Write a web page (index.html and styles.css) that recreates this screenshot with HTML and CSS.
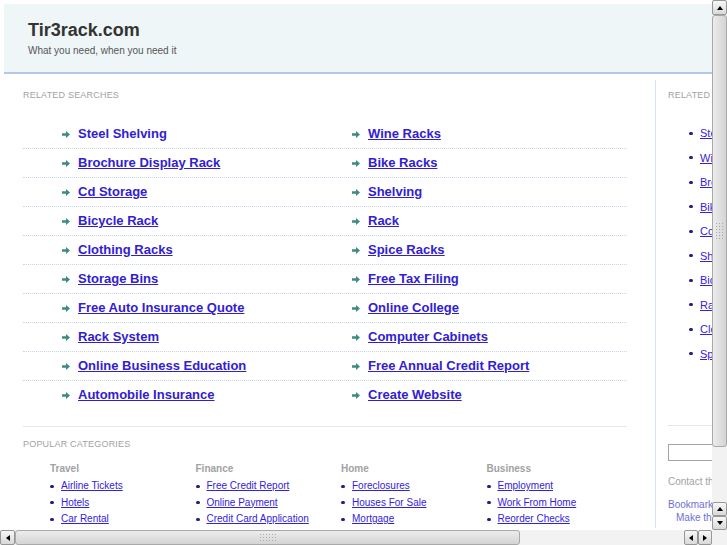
FILE: index.html
```html
<!DOCTYPE html>
<html lang="en">
<head>
    <meta charset="UTF-8">
    <meta name="viewport" content="width=device-width, initial-scale=1.0">
    <title>Tir3rack.com</title>
    <link rel="stylesheet" href="styles.css">
</head>
<body>
    <div class="page">
        <div class="header">
            <h1>Tir3rack.com</h1>
            <p>What you need, when you need it</p>
        </div>

        <div class="main">
            <div class="content">
                <h2 class="label">Related Searches</h2>
                <ul class="searches">
                    <li>
                        <span class="item"><svg class="arrow" viewBox="0 0 8 7"><path d="M0 2.3h4V0l4 3.5-4 3.5V4.7H0z"/></svg><a href="#" class="hover">Steel Shelving</a></span>
                        <span class="item"><svg class="arrow" viewBox="0 0 8 7"><path d="M0 2.3h4V0l4 3.5-4 3.5V4.7H0z"/></svg><a href="#">Wine Racks</a></span>
                    </li>
                    <li>
                        <span class="item"><svg class="arrow" viewBox="0 0 8 7"><path d="M0 2.3h4V0l4 3.5-4 3.5V4.7H0z"/></svg><a href="#">Brochure Display Rack</a></span>
                        <span class="item"><svg class="arrow" viewBox="0 0 8 7"><path d="M0 2.3h4V0l4 3.5-4 3.5V4.7H0z"/></svg><a href="#">Bike Racks</a></span>
                    </li>
                    <li>
                        <span class="item"><svg class="arrow" viewBox="0 0 8 7"><path d="M0 2.3h4V0l4 3.5-4 3.5V4.7H0z"/></svg><a href="#">Cd Storage</a></span>
                        <span class="item"><svg class="arrow" viewBox="0 0 8 7"><path d="M0 2.3h4V0l4 3.5-4 3.5V4.7H0z"/></svg><a href="#">Shelving</a></span>
                    </li>
                    <li>
                        <span class="item"><svg class="arrow" viewBox="0 0 8 7"><path d="M0 2.3h4V0l4 3.5-4 3.5V4.7H0z"/></svg><a href="#">Bicycle Rack</a></span>
                        <span class="item"><svg class="arrow" viewBox="0 0 8 7"><path d="M0 2.3h4V0l4 3.5-4 3.5V4.7H0z"/></svg><a href="#">Rack</a></span>
                    </li>
                    <li>
                        <span class="item"><svg class="arrow" viewBox="0 0 8 7"><path d="M0 2.3h4V0l4 3.5-4 3.5V4.7H0z"/></svg><a href="#">Clothing Racks</a></span>
                        <span class="item"><svg class="arrow" viewBox="0 0 8 7"><path d="M0 2.3h4V0l4 3.5-4 3.5V4.7H0z"/></svg><a href="#">Spice Racks</a></span>
                    </li>
                    <li>
                        <span class="item"><svg class="arrow" viewBox="0 0 8 7"><path d="M0 2.3h4V0l4 3.5-4 3.5V4.7H0z"/></svg><a href="#">Storage Bins</a></span>
                        <span class="item"><svg class="arrow" viewBox="0 0 8 7"><path d="M0 2.3h4V0l4 3.5-4 3.5V4.7H0z"/></svg><a href="#">Free Tax Filing</a></span>
                    </li>
                    <li>
                        <span class="item"><svg class="arrow" viewBox="0 0 8 7"><path d="M0 2.3h4V0l4 3.5-4 3.5V4.7H0z"/></svg><a href="#">Free Auto Insurance Quote</a></span>
                        <span class="item"><svg class="arrow" viewBox="0 0 8 7"><path d="M0 2.3h4V0l4 3.5-4 3.5V4.7H0z"/></svg><a href="#">Online College</a></span>
                    </li>
                    <li>
                        <span class="item"><svg class="arrow" viewBox="0 0 8 7"><path d="M0 2.3h4V0l4 3.5-4 3.5V4.7H0z"/></svg><a href="#">Rack System</a></span>
                        <span class="item"><svg class="arrow" viewBox="0 0 8 7"><path d="M0 2.3h4V0l4 3.5-4 3.5V4.7H0z"/></svg><a href="#">Computer Cabinets</a></span>
                    </li>
                    <li>
                        <span class="item"><svg class="arrow" viewBox="0 0 8 7"><path d="M0 2.3h4V0l4 3.5-4 3.5V4.7H0z"/></svg><a href="#">Online Business Education</a></span>
                        <span class="item"><svg class="arrow" viewBox="0 0 8 7"><path d="M0 2.3h4V0l4 3.5-4 3.5V4.7H0z"/></svg><a href="#">Free Annual Credit Report</a></span>
                    </li>
                    <li>
                        <span class="item"><svg class="arrow" viewBox="0 0 8 7"><path d="M0 2.3h4V0l4 3.5-4 3.5V4.7H0z"/></svg><a href="#">Automobile Insurance</a></span>
                        <span class="item"><svg class="arrow" viewBox="0 0 8 7"><path d="M0 2.3h4V0l4 3.5-4 3.5V4.7H0z"/></svg><a href="#">Create Website</a></span>
                    </li>
                </ul>

                <hr class="divider">

                <h2 class="label label-popular">Popular Categories</h2>
                <div class="categories">
                    <div class="category">
                        <h3>Travel</h3>
                        <ul>
                            <li><a href="#">Airline Tickets</a></li>
                            <li><a href="#">Hotels</a></li>
                            <li><a href="#">Car Rental</a></li>
                        </ul>
                    </div>
                    <div class="category">
                        <h3>Finance</h3>
                        <ul>
                            <li><a href="#">Free Credit Report</a></li>
                            <li><a href="#">Online Payment</a></li>
                            <li><a href="#">Credit Card Application</a></li>
                        </ul>
                    </div>
                    <div class="category">
                        <h3>Home</h3>
                        <ul>
                            <li><a href="#">Foreclosures</a></li>
                            <li><a href="#">Houses For Sale</a></li>
                            <li><a href="#">Mortgage</a></li>
                        </ul>
                    </div>
                    <div class="category">
                        <h3>Business</h3>
                        <ul>
                            <li><a href="#">Employment</a></li>
                            <li><a href="#">Work From Home</a></li>
                            <li><a href="#">Reorder Checks</a></li>
                        </ul>
                    </div>
                </div>
            </div>

            <div class="sidebar">
                <h2 class="label">Related Searches</h2>
                <ul class="side-links">
                    <li><a href="#">Steel Shelving</a></li>
                    <li><a href="#">Wine Racks</a></li>
                    <li><a href="#">Brochure Display Rack</a></li>
                    <li><a href="#">Bike Racks</a></li>
                    <li><a href="#">Cd Storage</a></li>
                    <li><a href="#">Shelving</a></li>
                    <li><a href="#">Bicycle Rack</a></li>
                    <li><a href="#">Rack</a></li>
                    <li><a href="#">Clothing Racks</a></li>
                    <li><a href="#">Spice Racks</a></li>
                </ul>
                <hr class="divider side-divider">
                <input class="search" type="text">
                <p class="contact">Contact the domain owner</p>
                <p class="bookmark"><a href="#">Bookmark this page</a></p>
                <p class="bookmark indent"><a href="#">Make this your homepage</a></p>
            </div>
        </div>
    </div>

    <!-- barras de rolagem desenhadas por cima da pagina -->
    <div class="vscroll">
        <span class="sb-btn"><span class="tri up"></span></span>
        <span class="sb-thumb"><span class="grip"></span></span>
        <span class="sb-track"></span>
        <span class="sb-btn"><span class="tri up"></span></span>
        <span class="sb-btn"><span class="tri down"></span></span>
    </div>
    <div class="hscroll">
        <span class="sb-btn"><span class="tri left"></span></span>
        <span class="sb-thumb"><span class="grip"></span></span>
        <span class="sb-track"></span>
        <span class="sb-btn"><span class="tri left"></span></span>
        <span class="sb-btn"><span class="tri right"></span></span>
    </div>
    <div class="corner"></div>
</body>
</html>
```

FILE: styles.css
```css
* {
    margin: 0;
    padding: 0;
    box-sizing: border-box;
}

html, body {
    overflow: hidden;
}

body {
    font-family: "Liberation Sans", Arial, sans-serif;
    background-color: #fff;
    color: #333;
}

ul {
    list-style: none;
}

.page {
    width: 1000px;
    padding: 4px 0 0 4px;
}

.header {
    height: 70px;
    padding: 15px 0 0 24px;
    background-color: #eff6f8;
    border-bottom: 2px solid #b4c9ea;
}

.header h1 {
    font-size: 18px;
    line-height: 22px;
    font-weight: bold;
    color: #333;
}

.header p {
    margin-top: 3px;
    font-size: 10px;
    line-height: 14px;
    color: #555;
}

.main {
    display: flex;
    margin-top: 6px;
}

.content {
    flex: none;
    width: 652px;
    padding: 9px 28px 0 19px;
    border-right: 1px solid #d5e2f3;
}

.label {
    font-size: 9px;
    line-height: 12px;
    font-weight: normal;
    text-transform: uppercase;
    letter-spacing: 0.2px;
    color: #a2a2a2;
}

.searches {
    margin-top: 19px;
}

.searches li {
    display: flex;
    height: 29px;
    border-bottom: 1px dotted #c6d7ec;
}

.searches li:last-child {
    height: 28px;
    border-bottom: none;
}

.item {
    display: flex;
    align-items: center;
    gap: 8px;
    line-height: 28px;
}

.item:first-child {
    width: 329px;
    padding-left: 39px;
}

.arrow {
    width: 8px;
    height: 7px;
    fill: #3d8c80;
}

.item a {
    font-size: 13px;
    font-weight: bold;
    color: #3120d2;
}

.item a.hover {
    text-decoration: none;
}

.divider {
    height: 1px;
    border: none;
    background-color: #dde8f4;
    margin-top: 17px;
}

.label-popular {
    margin-top: 11px;
}

.categories {
    display: flex;
    margin-top: 12px;
    padding-left: 27px;
}

.category {
    flex: none;
    width: 145.5px;
}

.category h3 {
    font-size: 10px;
    line-height: 14px;
    font-weight: bold;
    color: #a2a2a2;
}

.category ul {
    margin-top: 2px;
}

.category li,
.side-links li {
    display: flex;
    align-items: center;
    gap: 7px;
    font-size: 10px;
    line-height: 16.5px;
}

.category li::before,
.side-links li::before {
    content: "";
    width: 4px;
    height: 3px;
    border-radius: 2px;
    background-color: #1e1e86;
}

.category a,
.side-links a {
    color: #3322dd;
}

.sidebar {
    flex: none;
    width: 300px;
    padding: 9px 0 0 12px;
}

.side-links {
    margin-top: 20px;
    padding-left: 21px;
}

.side-links li {
    line-height: 24.5px;
    font-size: 11px;
}

.side-divider {
    margin-top: 59px;
}

.search {
    display: block;
    width: 200px;
    height: 17px;
    margin-top: 18px;
    border: 1px solid #a5a5a5;
}

.contact {
    margin-top: 15px;
    font-size: 10px;
    line-height: 12px;
    color: #a2a2a2;
}

.bookmark {
    font-size: 10px;
    line-height: 13px;
}

.bookmark a {
    color: #6f6fd2;
    text-decoration: none;
}

.contact + .bookmark {
    margin-top: 10px;
}

.indent {
    padding-left: 8px;
}

/* barras de rolagem */
.vscroll,
.hscroll,
.corner {
    position: fixed;
    display: flex;
    background-color: #f2f2f2;
    background-image: radial-gradient(#d6d6d6 0.6px, transparent 0.7px);
    background-size: 2px 2px;
}

.vscroll {
    top: 0;
    right: 0;
    width: 15px;
    height: 530px;
    flex-direction: column;
}

.hscroll {
    left: 0;
    bottom: 0;
    width: 712px;
    height: 15px;
}

.corner {
    right: 0;
    bottom: 0;
    width: 15px;
    height: 15px;
}

.sb-btn {
    display: flex;
    align-items: center;
    justify-content: center;
    flex: none;
    width: 15px;
    height: 14px;
    background: linear-gradient(#f7f7f7, #d9d9d9);
    border: 1px solid #979797;
    border-radius: 2px;
}

.vscroll .sb-btn:first-child {
    height: 15px;
}

.hscroll .sb-btn {
    width: 14px;
    height: 15px;
}

.hscroll .sb-btn:first-child {
    width: 15px;
}

.sb-thumb {
    display: flex;
    align-items: center;
    justify-content: center;
    flex: none;
    background: linear-gradient(90deg, #ececec, #d4d4d4);
    border: 1px solid #a9a9a9;
    border-radius: 3px;
}

.vscroll .sb-thumb {
    height: 432px;
}

.hscroll .sb-thumb {
    width: 505px;
    background: linear-gradient(#ececec, #d4d4d4);
}

.sb-track {
    flex: 1;
}

.grip {
    background-image: radial-gradient(#a8a8a8 0.6px, transparent 0.8px);
    background-size: 3px 3px;
}

.vscroll .grip {
    width: 9px;
    height: 18px;
}

.hscroll .grip {
    width: 18px;
    height: 9px;
}

.tri {
    width: 0;
    height: 0;
    border: 3px solid transparent;
}

.tri.up {
    border-bottom: 4px solid #000;
    border-top: none;
}

.tri.down {
    border-top: 4px solid #000;
    border-bottom: none;
}

.tri.left {
    border-right: 4px solid #000;
    border-left: none;
}

.tri.right {
    border-left: 4px solid #000;
    border-right: none;
}
```
